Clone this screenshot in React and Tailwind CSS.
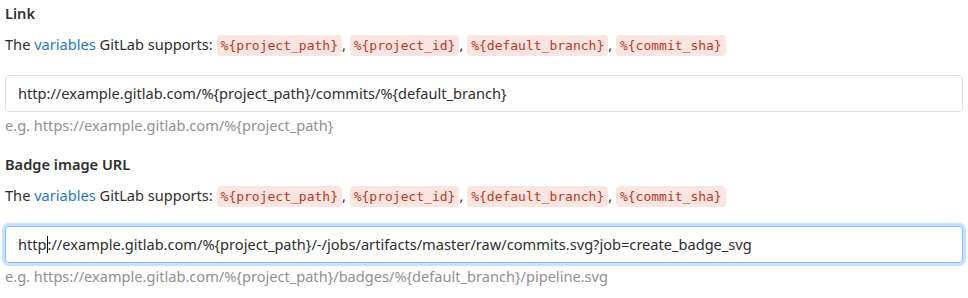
import React from 'react';

const vars = ['%{project_path}', '%{project_id}', '%{default_branch}', '%{commit_sha}'];

const Code = ({ children }) => (
  <code className="rounded-[4px] bg-[#fbe5e1] px-[4px] py-[3px] font-['DejaVu_Sans_Mono','Liberation_Mono',monospace] text-[13px] text-[#c0341d]">
    {children}
  </code>
);

const VarsHelp = () => (
  <p className="leading-5">
    The <a className="text-[#1f78d1]">variables</a> GitLab supports:{' '}
    {vars.map((v, i) => (
      <React.Fragment key={v}>
        <Code>{v}</Code>
        {i < vars.length - 1 && ', '}
      </React.Fragment>
    ))}
  </p>
);

const Field = ({ label, value, hint, focused, caretAt }) => (
  <div className="flex flex-col">
    <label className="font-semibold leading-5">{label}</label>
    <div className="mt-[11px]">
      <VarsHelp />
    </div>
    <div
      className={
        'mt-[19px] flex h-[37px] items-center rounded-[4px] border px-3 ' +
        (focused
          ? 'border-[#80bdff] shadow-[0_0_0_3px_rgba(128,189,255,0.45)]'
          : 'border-[#dfdfdf]')
      }
    >
      <span className="whitespace-nowrap text-[#2e2e2e]">
        {caretAt ? (
          <>
            {value.slice(0, caretAt)}
            <span className="inline-block h-[17px] w-px translate-y-[3px] bg-black" />
            {value.slice(caretAt)}
          </>
        ) : (
          value
        )}
      </span>
    </div>
    <p className="mt-[3px] leading-5 text-[#919191]">{hint}</p>
  </div>
);

export default function App() {
  return (
    <div className="flex w-[968px] flex-col gap-[19px] bg-white px-[5px] pt-[3px] font-['Noto_Sans',sans-serif] text-[14.6px] text-[#2e2e2e]">
      <Field
        label="Link"
        value="http://example.gitlab.com/%{project_path}/commits/%{default_branch}"
        hint="e.g. https://example.gitlab.com/%{project_path}"
      />
      <Field
        label="Badge image URL"
        value="http://example.gitlab.com/%{project_path}/-/jobs/artifacts/master/raw/commits.svg?job=create_badge_svg"
        hint="e.g. https://example.gitlab.com/%{project_path}/badges/%{default_branch}/pipeline.svg"
        focused
        caretAt={4}
      />
    </div>
  );
}
